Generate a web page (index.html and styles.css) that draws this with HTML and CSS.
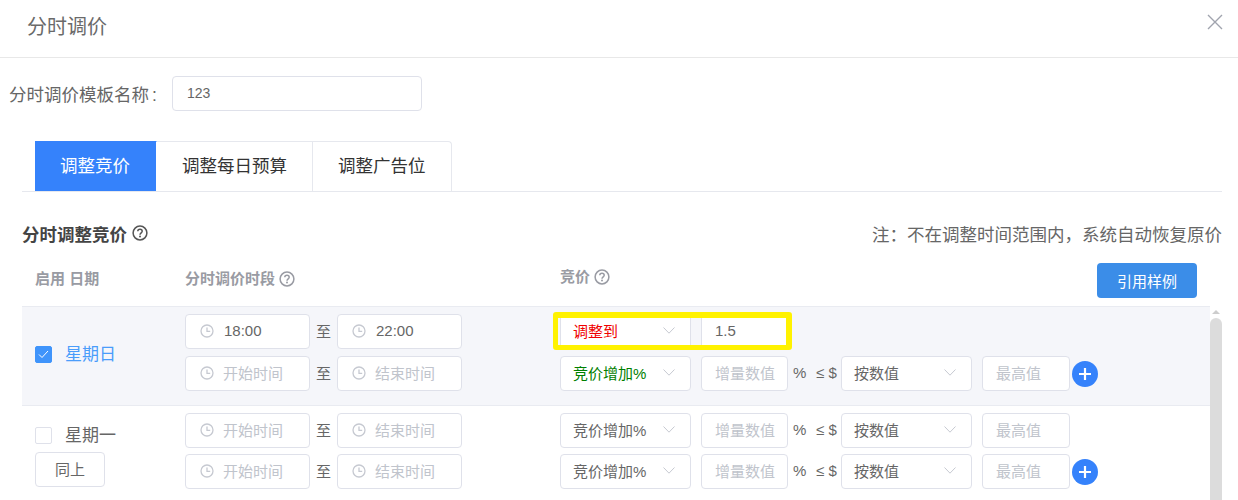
FILE: index.html
```html
<!DOCTYPE html>
<html lang="zh-CN">
<head>
    <meta charset="UTF-8">
    <title>分时调价</title>
    <link rel="stylesheet" href="styles.css">
</head>
<body>

<svg class="icon-defs" width="0" height="0">
    <symbol id="clock" viewBox="0 0 14 14">
        <circle cx="7" cy="7" r="6" fill="none" stroke="currentColor" stroke-width="1.3"/>
        <path d="M7 3.4V7.4H10.2" fill="none" stroke="currentColor" stroke-width="1.3"/>
    </symbol>
    <symbol id="chevron" viewBox="0 0 12 7">
        <path d="M.5.5 6 6.2 11.500.5" fill="none" stroke="currentColor" stroke-width="1"/>
    </symbol>
    <symbol id="help" viewBox="0 0 16 16">
        <circle cx="8" cy="8" r="6.9" fill="none" stroke="currentColor" stroke-width="1.5"/>
        <path d="M5.800 6.300C5.800 5 6.800 4.300 8 4.300S10.200 5.100 10.200 6.300C10.200 7.800 8 7.900 8 9.700" fill="none" stroke="currentColor" stroke-width="1.500"/>
        <circle cx="8" cy="11.600" r="1" fill="currentColor"/>
    </symbol>
    <symbol id="plus" viewBox="0 0 26 26">
        <circle cx="13" cy="13" r="13" fill="#3582fb"/>
        <path d="M13 7V19M7 13H19" stroke="#fff" stroke-width="2.200"/>
    </symbol>
</svg>

<header class="dialog-head">
    <h1 class="dialog-title">分时调价</h1>
    <svg class="close-icon" width="16" height="16" viewBox="0 0 16 16">
        <path d="M1 1 15 15M15 1 1 15" stroke="#a0a4ae" stroke-width="1.400" fill="none"/>
    </svg>
</header>

<div class="name-row">
    <label class="name-label">分时调价模板名称<span class="colon">:</span></label>
    <div class="box name-input">123</div>
</div>

<nav class="tabs">
    <div class="tab active">调整竞价</div>
    <div class="tab">调整每日预算</div>
    <div class="tab">调整广告位</div>
</nav>

<div class="section-head">
    <h2 class="section-title">分时调整竞价 <svg class="help-dark"><use href="#help"/></svg></h2>
    <div class="section-note">注&#xFF1A;不在调整时间范围内&#xFF0C;系统自动恢复原价</div>
</div>

<div class="col-head">
    <div class="col-day">启用 日期</div>
    <div class="col-time">分时调价时段 <svg class="help-grey"><use href="#help"/></svg></div>
    <div class="col-bid">竞价 <svg class="help-grey"><use href="#help"/></svg></div>
    <button class="sample-btn">引用样例</button>
</div>

<div class="table-wrap">
    <div class="rows">

        <!-- 星期日 -->
        <div class="row row-on">
            <div class="day-cell">
                <div class="day-line">
                    <span class="check checked">
                        <svg width="11" height="9" viewBox="0 0 11 9"><path d="M1 4.500 4 7.500 10 1" fill="none" stroke="#fff" stroke-width="1"/></svg>
                    </span>
                    <span class="day-name">星期日</span>
                </div>
            </div>
            <div class="lines">
                <div class="line">
                    <div class="time-cell">
                        <div class="box time"><svg class="clock"><use href="#clock"/></svg><span class="value">18:00</span></div>
                        <span class="to">至</span>
                        <div class="box time"><svg class="clock"><use href="#clock"/></svg><span class="value">22:00</span></div>
                    </div>
                    <div class="bid-cell">
                        <div class="box select"><span class="red">调整到</span><svg class="chevron"><use href="#chevron"/></svg></div>
                        <div class="box amount"><span class="value">1.5</span></div>
                        <div class="mark"></div>
                    </div>
                </div>
                <div class="line">
                    <div class="time-cell">
                        <div class="box time"><svg class="clock"><use href="#clock"/></svg><span class="hint">开始时间</span></div>
                        <span class="to">至</span>
                        <div class="box time"><svg class="clock"><use href="#clock"/></svg><span class="hint">结束时间</span></div>
                    </div>
                    <div class="bid-cell">
                        <div class="box select"><span class="green">竞价增加%</span><svg class="chevron"><use href="#chevron"/></svg></div>
                        <div class="box amount"><span class="hint">增量数值</span></div>
                        <span class="unit">%</span>
                        <span class="limit">≤ $</span>
                        <div class="box select"><span>按数值</span><svg class="chevron"><use href="#chevron"/></svg></div>
                        <div class="box amount top-val"><span class="hint">最高值</span></div>
                        <svg class="plus"><use href="#plus"/></svg>
                    </div>
                </div>
            </div>
        </div>

        <!-- 星期一 -->
        <div class="row row-next">
            <div class="day-cell">
                <div class="day-line">
                    <span class="check"></span>
                    <span class="day-name plain">星期一</span>
                </div>
                <button class="same-btn">同上</button>
            </div>
            <div class="lines">
                <div class="line">
                    <div class="time-cell">
                        <div class="box time"><svg class="clock"><use href="#clock"/></svg><span class="hint">开始时间</span></div>
                        <span class="to">至</span>
                        <div class="box time"><svg class="clock"><use href="#clock"/></svg><span class="hint">结束时间</span></div>
                    </div>
                    <div class="bid-cell">
                        <div class="box select"><span>竞价增加%</span><svg class="chevron"><use href="#chevron"/></svg></div>
                        <div class="box amount"><span class="hint">增量数值</span></div>
                        <span class="unit">%</span>
                        <span class="limit">≤ $</span>
                        <div class="box select"><span>按数值</span><svg class="chevron"><use href="#chevron"/></svg></div>
                        <div class="box amount top-val"><span class="hint">最高值</span></div>
                    </div>
                </div>
                <div class="line">
                    <div class="time-cell">
                        <div class="box time"><svg class="clock"><use href="#clock"/></svg><span class="hint">开始时间</span></div>
                        <span class="to">至</span>
                        <div class="box time"><svg class="clock"><use href="#clock"/></svg><span class="hint">结束时间</span></div>
                    </div>
                    <div class="bid-cell">
                        <div class="box select"><span>竞价增加%</span><svg class="chevron"><use href="#chevron"/></svg></div>
                        <div class="box amount"><span class="hint">增量数值</span></div>
                        <span class="unit">%</span>
                        <span class="limit">≤ $</span>
                        <div class="box select"><span>按数值</span><svg class="chevron"><use href="#chevron"/></svg></div>
                        <div class="box amount top-val"><span class="hint">最高值</span></div>
                        <svg class="plus"><use href="#plus"/></svg>
                    </div>
                </div>
            </div>
        </div>

    </div>

    <div class="scrollbar">
        <div class="scroll-arrow"></div>
        <div class="scroll-thumb"></div>
    </div>
</div>

</body>
</html>
```

FILE: styles.css
```css
html, body {
    height: 500px;
    overflow: hidden;
}
body {
    margin: 0;
    background-color: #ffffff;
    color: #666666;
    font-family: "Liberation Sans", "Noto Sans CJK SC", sans-serif;
    font-size: 15px;
}
.icon-defs {
    position: absolute;
}

/* header */
.dialog-head {
    display: flex;
    justify-content: space-between;
    box-sizing: border-box;
    height: 58px;
    padding: 14px 15px 0 27px;
    border-bottom: 1px solid #e8e8e8;
}
.dialog-title {
    margin: 0;
    font-size: 20px;
    font-weight: normal;
    line-height: 26px;
    color: #6a6a6a;
}

/* name */
.name-row {
    display: flex;
    align-items: center;
    margin-top: 18px;
    padding-left: 9px;
}
.name-label {
    width: 163px;
    font-size: 17.500px;
    color: #666666;
}
.colon {
    margin-left: 3px;
}
.box {
    display: flex;
    align-items: center;
    box-sizing: border-box;
    height: 35px;
    padding-bottom: 2px;
    border: 1px solid #dfe1ea;
    border-radius: 4px;
    background-color: #ffffff;
}
.name-input {
    width: 250px;
    padding-left: 14px;
    font-size: 14px;
}

/* tabs */
.tabs {
    display: flex;
    box-sizing: border-box;
    width: 1200px;
    height: 51px;
    margin: 30px 0 0 22px;
    padding-left: 13px;
    border-bottom: 1px solid #e6e8ee;
}
.tab {
    padding: 0 25px;
    border-top: 1px solid #e6e8ee;
    border-right: 1px solid #e6e8ee;
    font-size: 17.500px;
    line-height: 49px;
    color: #333333;
}
.tab:last-child {
    border-top-right-radius: 4px;
}
.tab.active {
    width: 71px;
    border-top-color: #3582fb;
    border-right-color: #ffffff;
    background-color: #3582fb;
    color: #ffffff;
}

/* section title */
.section-head {
    display: flex;
    justify-content: space-between;
    align-items: center;
    width: 1200px;
    height: 22px;
    margin: 30px 0 0 22px;
}
.section-title {
    display: flex;
    align-items: center;
    gap: 5px;
    margin: 0;
    font-size: 17.500px;
    color: #444444;
}
.section-note {
    font-size: 17.500px;
    color: #666666;
}
.help-dark {
    width: 16px;
    height: 16px;
    color: #555555;
}
.help-grey {
    width: 16px;
    height: 16px;
    color: #999ba3;
    vertical-align: -3px;
}

/* column heads */
.col-head {
    display: flex;
    align-items: flex-start;
    box-sizing: border-box;
    width: 1188px;
    height: 43px;
    margin: 19px 0 0 22px;
    padding-left: 13px;
    font-weight: bold;
    color: #999ba3;
}
.col-day {
    width: 150px;
    line-height: 32px;
}
.col-time {
    width: 375px;
    line-height: 32px;
}
.col-bid {
    width: 537px;
    line-height: 28px;
}
.sample-btn {
    width: 100px;
    height: 35px;
    padding: 0;
    border: 0;
    border-radius: 4px;
    background-color: #3b8de8;
    color: #ffffff;
    font-family: inherit;
    font-size: 15px;
}

/* table */
.table-wrap {
    display: flex;
    width: 1200px;
    margin-left: 22px;
}
.rows {
    width: 1188px;
}
.row {
    display: flex;
    box-sizing: border-box;
    padding: 7px 0 0 13px;
    border-top: 1px solid #e9ebf1;
}
.row-on {
    height: 99px;
    background-color: #f5f6fa;
}
.row-on .day-cell {
    padding-top: 32px;
}
.row-on .lines {
    gap: 7px;
}
.day-cell {
    width: 150px;
    padding-top: 14px;
}
.day-line {
    display: flex;
    align-items: center;
    height: 17px;
}
.check {
    display: flex;
    align-items: center;
    justify-content: center;
    box-sizing: border-box;
    width: 17px;
    height: 17px;
    margin-right: 13px;
    border: 1px solid #dfe1ea;
    border-radius: 2px;
    background-color: #ffffff;
}
.check.checked {
    border-color: #3f94fb;
    background-color: #3f94fb;
}
.day-name {
    font-size: 17px;
    line-height: 17px;
    color: #4a9dfa;
}
.day-name.plain {
    color: #666666;
}
.same-btn {
    display: block;
    box-sizing: border-box;
    width: 70px;
    height: 35px;
    margin-top: 8px;
    padding: 0 0 2px;
    border: 1px solid #dfe1ea;
    border-radius: 4px;
    background-color: #ffffff;
    color: #666666;
    font-family: inherit;
    font-size: 15px;
}
.lines {
    display: flex;
    flex-direction: column;
    gap: 6px;
}
.line {
    display: flex;
}

/* time pickers */
.time-cell {
    display: flex;
    align-items: center;
    width: 375px;
}
.time {
    width: 125px;
    padding-left: 14px;
}
.clock {
    flex: none;
    width: 14px;
    height: 14px;
    margin-right: 9px;
    color: #c6c9d1;
}
.to {
    width: 27px;
    padding-bottom: 2px;
    text-align: center;
}
.value {
    color: #666666;
}
.time .value {
    margin-left: 1px;
}
.hint {
    color: #c0c4cc;
}

/* bid */
.bid-cell {
    position: relative;
    display: flex;
    align-items: center;
}
.select {
    justify-content: space-between;
    width: 131px;
    margin-right: 10px;
    padding: 0 15px 2px 12px;
}
.chevron {
    flex: none;
    width: 12px;
    height: 7px;
    color: #c6c9d1;
}
.amount {
    width: 87px;
    padding-left: 13px;
}
.unit {
    width: 28px;
    padding-bottom: 2px;
    padding-left: 5px;
    box-sizing: border-box;
}
.limit {
    width: 25px;
    padding-bottom: 2px;
}
.top-val {
    width: 88px;
}
.plus {
    flex: none;
    width: 26px;
    height: 26px;
    margin-left: 2px;
}
.red {
    color: #f00000;
}
.green {
    color: #008000;
}

/* yellow marking drawn over the first bid line */
.mark {
    position: absolute;
    top: -2px;
    left: -7px;
    box-sizing: border-box;
    width: 239px;
    height: 38px;
    border: 6px solid #fff200;
    border-width: 6px 6px 5px 5px;
    border-radius: 3px;
}

/* scrollbar */
.scrollbar {
    width: 12px;
    padding-top: 4px;
}
.scroll-arrow {
    width: 0;
    height: 0;
    margin: 0 auto 4px;
    border-right: 4px solid transparent;
    border-bottom: 4px solid #cdcdcd;
    border-left: 4px solid transparent;
}
.scroll-thumb {
    height: 200px;
    border-radius: 6px 6px 0 0;
    background-color: #dcdcdc;
}
```
